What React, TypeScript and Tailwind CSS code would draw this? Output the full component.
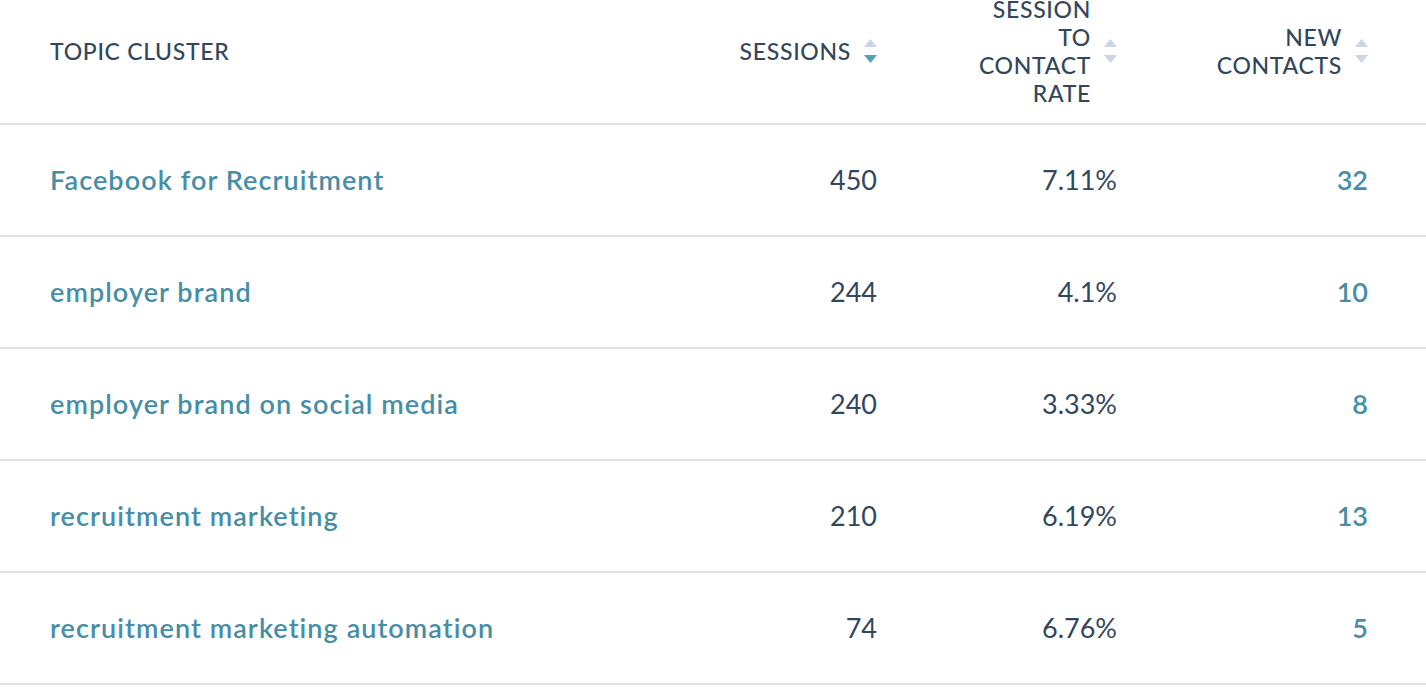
import React from "react";

interface Row {
    topic: string
    sessions: number
    rate: string
    contacts: number
}

const rows: Row[] = [
    {topic: "Facebook for Recruitment", sessions: 450, rate: "7.11%", contacts: 32},
    {topic: "employer brand", sessions: 244, rate: "4.1%", contacts: 10},
    {topic: "employer brand on social media", sessions: 240, rate: "3.33%", contacts: 8},
    {topic: "recruitment marketing", sessions: 210, rate: "6.19%", contacts: 13},
    {topic: "recruitment marketing automation", sessions: 74, rate: "6.76%", contacts: 5},
];

const SortArrows = ({active}: { active?: boolean }) => (
    <svg width="13" height="25" viewBox="0 0 13 25" className="shrink-0">
        <path d="M6.5 0 L13 8 L0 8 Z" fill="#cbd6e2"/>
        <path d="M0 16 L13 16 L6.5 24 Z" fill={active ? "#4fa0c1" : "#cbd6e2"}/>
    </svg>
);

const HeaderCell = ({lines, active}: { lines: string[], active?: boolean }) => (
    <div className="flex items-center justify-end gap-[13px]">
        <div className="text-right">
            {lines.map((l) => (
                <div key={l}>{l}</div>
            ))}
        </div>
        <SortArrows active={active}/>
    </div>
);

const App = () => {
    return (
        <div className="min-h-screen bg-white text-[#33475b]" style={{fontFamily: "Lato, 'Noto Sans', sans-serif"}}>
            <div
                className="grid grid-cols-[1fr_240px_240px_251px] grid-rows-[102px] items-center h-[125px] pl-[50px] pr-[58px] pb-[21px] border-b-2 border-[#dfdfdf] text-[23px] leading-[28px] tracking-[0.03em] font-medium uppercase">
                <div>Topic Cluster</div>
                <HeaderCell lines={["Sessions"]} active/>
                <HeaderCell lines={["Session", "to", "contact", "rate"]}/>
                <HeaderCell lines={["New", "contacts"]}/>
            </div>
            {rows.map((r) => (
                <div key={r.topic}
                     className="grid grid-cols-[1fr_240px_240px_251px] items-center h-[112px] pl-[50px] pr-[58px] border-b-2 border-[#dfdfdf] text-[27px]">
                    <a className="font-semibold tracking-[0.04em] text-[#468ea6]" href="#">{r.topic}</a>
                    <div className="text-right">{r.sessions}</div>
                    <div className="text-right">{r.rate}</div>
                    <div className="text-right font-semibold text-[#468ea6]">{r.contacts}</div>
                </div>
            ))}
        </div>
    )
}

export default App
